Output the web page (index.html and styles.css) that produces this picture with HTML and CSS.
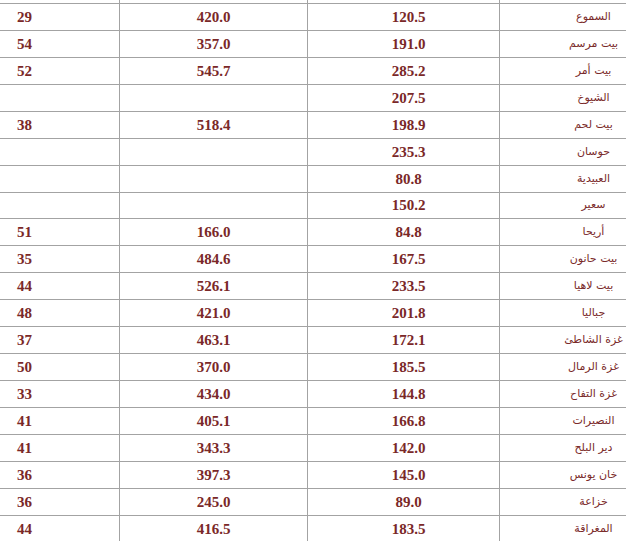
FILE: index.html
```html
<!DOCTYPE html>
<html lang="ar">
<head>
<meta charset="utf-8">
<link rel="stylesheet" href="styles.css">
</head>
<body>
<table class="stats">
  <colgroup>
    <col class="c-name"><col class="c-b"><col class="c-c"><col class="c-d">
  </colgroup>
  <tbody>
    <tr class="lead"><td></td><td></td><td></td><td></td></tr>
    <tr><td class="name">السموع</td><td class="b">120.5</td><td>420.0</td><td>29</td></tr>
    <tr><td class="name">بيت مرسم</td><td class="b">191.0</td><td>357.0</td><td>54</td></tr>
    <tr><td class="name">بيت أمر</td><td class="b">285.2</td><td>545.7</td><td>52</td></tr>
    <tr><td class="name">الشيوخ</td><td class="b">207.5</td><td></td><td></td></tr>
    <tr><td class="name">بيت لحم</td><td class="b">198.9</td><td>518.4</td><td>38</td></tr>
    <tr><td class="name">حوسان</td><td class="b">235.3</td><td></td><td></td></tr>
    <tr><td class="name">العبيدية</td><td class="b">80.8</td><td></td><td></td></tr>
    <tr><td class="name">سعير</td><td class="b">150.2</td><td></td><td></td></tr>
    <tr><td class="name">أريحا</td><td class="b">84.8</td><td>166.0</td><td>51</td></tr>
    <tr><td class="name">بيت حانون</td><td class="b">167.5</td><td>484.6</td><td>35</td></tr>
    <tr><td class="name">بيت لاهيا</td><td class="b">233.5</td><td>526.1</td><td>44</td></tr>
    <tr><td class="name">جباليا</td><td class="b">201.8</td><td>421.0</td><td>48</td></tr>
    <tr><td class="name">غزة الشاطئ</td><td class="b">172.1</td><td>463.1</td><td>37</td></tr>
    <tr><td class="name">غزة الرمال</td><td class="b">185.5</td><td>370.0</td><td>50</td></tr>
    <tr><td class="name">غزة التفاح</td><td class="b">144.8</td><td>434.0</td><td>33</td></tr>
    <tr><td class="name">النصيرات</td><td class="b">166.8</td><td>405.1</td><td>41</td></tr>
    <tr><td class="name">دير البلح</td><td class="b">142.0</td><td>343.3</td><td>41</td></tr>
    <tr><td class="name">خان يونس</td><td class="b">145.0</td><td>397.3</td><td>36</td></tr>
    <tr><td class="name">خزاعة</td><td class="b">89.0</td><td>245.0</td><td>36</td></tr>
    <tr><td class="name">المغراقة</td><td class="b">183.5</td><td>416.5</td><td>44</td></tr>
    <tr><td class="name"></td><td class="b"></td><td></td><td></td></tr>
  </tbody>
</table>
</body>
</html>
```
FILE: styles.css
```css
html, body {
  margin: 0;
  padding: 0;
  background: #ffffff;
  overflow: hidden;
}
.stats {
  direction: rtl;
  border-collapse: collapse;
  table-layout: fixed;
  width: 758px;
  margin-left: -71px;
  margin-top: -24px;
  font-family: "Liberation Serif", "DejaVu Serif", serif;
  font-weight: bold;
  font-size: 15px;
  color: #7a2828;
}
.c-name { width: 188px; }
.c-b { width: 192px; }
.c-c { width: 188px; }
.c-d { width: 190px; }
.stats td {
  border: 1px solid #a3a3a3;
  height: 26.95px;
  padding: 0;
  text-align: center;
  vertical-align: middle;
  box-sizing: border-box;
  line-height: 16px;
}
.stats td.b {
  padding-left: 10px;
}
.stats td.name {
  font-family: "DejaVu Sans", sans-serif;
  font-weight: normal;
  font-size: 11px;
  color: #7a2a2a;
}
```
